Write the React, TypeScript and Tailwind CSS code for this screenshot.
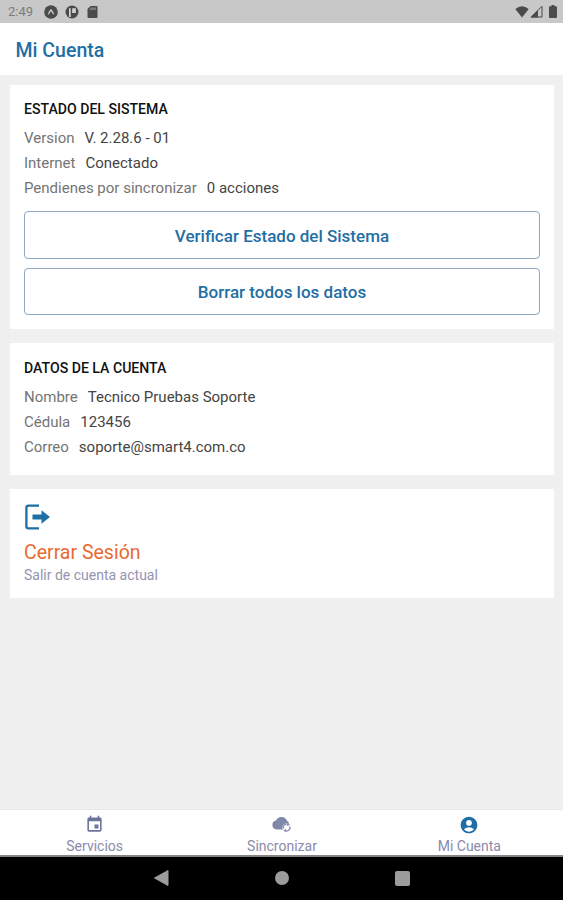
import type { ReactNode } from "react";
import { MdAccountCircle, MdEvent } from "react-icons/md";

function Row({ label, value }: { label: string; value: string }) {
  return (
    <div className="flex h-[25px] items-center whitespace-nowrap text-[15px]">
      <span className="mr-[10px] text-[#747474]">{label}</span>
      <span className="text-[#444]">{value}</span>
    </div>
  );
}

function Card({ title, className, children }: { title?: string; className: string; children: ReactNode }) {
  return (
    <section className={`bg-white px-[14px] ${className}`}>
      {title && <h2 className="mb-[7px] h-5 text-[14.1px] leading-5 font-medium text-[#111]">{title}</h2>}
      {children}
    </section>
  );
}

function OutlineButton({ children }: { children: ReactNode }) {
  return (
    <button className="flex h-[47.5px] w-full items-center justify-center rounded border border-[#8ba7c4] pt-[3px] text-[17px] font-medium text-[#1f6fa5]">
      {children}
    </button>
  );
}

function Tab({ icon, label }: { icon: ReactNode; label: string }) {
  return (
    <button className="flex flex-1 flex-col items-center pt-[5px] text-[#8a8aaa]">
      <span className="flex h-[19px] items-center justify-center">{icon}</span>
      <span className="mt-[3px] text-[14px] leading-[18px]">{label}</span>
    </button>
  );
}

function StatusBar() {
  return (
    <div className="flex h-[23px] items-center justify-between bg-[#c8c8c8] pr-[6px] pl-2 text-[#4b4b4b]">
      <div className="flex items-center">
        <span className="w-[36px] text-[13px] text-[#7c7c7c]">2:49</span>
        <svg className="h-[14px] w-[14px]" viewBox="0 0 14 14">
          <circle cx="7" cy="7" r="6.8" fill="currentColor" />
          <path d="M3.6 9.5 Q5.8 4.2 7 4.2 Q8.2 4.2 10.4 9.5 Q9.3 10 8.4 8.2 L7 6.2 L5.6 8.2 Q4.7 10 3.6 9.5Z" fill="#c8c8c8" />
        </svg>
        <svg className="ml-[7px] h-[14px] w-[14px]" viewBox="0 0 14 14">
          <circle cx="7" cy="7" r="6.5" fill="currentColor" />
          <path d="M4 3.2 H5.7 V12 H4Z M7.2 3.2 H10.8 V8 H7.2Z" fill="#d4d4d4" />
        </svg>
        <svg className="ml-2 h-[14px] w-[11px]" viewBox="0 0 11 14">
          <path d="M3.5 1 H9.5 Q10.5 1 10.5 2 V12 Q10.5 13 9.5 13 H1.5 Q.5 13 .5 12 V4Z" fill="currentColor" />
          <path d="M4 2.5 V5 M6 2.5 V5 M8 2.5 V5" stroke="#aaa" />
        </svg>
      </div>
      <div className="flex items-center">
        <svg className="h-3 w-[14px]" viewBox="0 0 14 12">
          <path d="M.3 3 Q7 -2.4 13.7 3 L7 11.6Z" fill="currentColor" />
        </svg>
        <svg className="ml-[1px] h-[13px] w-[13px]" viewBox="0 0 13 13">
          <path d="M1.2 12 L12 1.2 V12Z" fill="none" stroke="currentColor" />
          <path d="M.5 12.4 L8 5 V12.4Z" fill="currentColor" />
        </svg>
        <svg className="ml-[6px] h-[13px] w-[8px]" viewBox="0 0 8 13">
          <path d="M2.5 0 H5.5 V1.2 H7 Q8 1.2 8 2.2 V12 Q8 13 7 13 H1 Q0 13 0 12 V2.2 Q0 1.2 1 1.2 H2.5Z" fill="currentColor" />
        </svg>
      </div>
    </div>
  );
}

export default function App() {
  return (
    <div className="flex h-[900px] w-full flex-col overflow-hidden bg-[#f0f0f0] font-[Roboto,sans-serif]">
      <StatusBar />
      <header className="flex h-[52px] items-center bg-white pt-[3px] pl-[15.5px]">
        <h1 className="text-[19.5px] font-medium text-[#1f6fa5]">Mi Cuenta</h1>
      </header>
      <main className="flex flex-1 flex-col gap-[14px] pt-[10px] pr-[9px] pl-[10px]">
        <Card title="ESTADO DEL SISTEMA" className="h-[244px] pt-[14px]">
          <Row label="Version" value="V. 2.28.6 - 01" />
          <Row label="Internet" value="Conectado" />
          <Row label="Pendienes por sincronizar" value="0 acciones" />
          <div className="mt-[10px] flex flex-col gap-[9px]">
            <OutlineButton>Verificar Estado del Sistema</OutlineButton>
            <OutlineButton>Borrar todos los datos</OutlineButton>
          </div>
        </Card>
        <Card title="DATOS DE LA CUENTA" className="h-[132px] pt-[15px]">
          <Row label="Nombre" value="Tecnico Pruebas Soporte" />
          <Row label="Cédula" value="123456" />
          <Row label="Correo" value="soporte@smart4.com.co" />
        </Card>
        <Card className="h-[109px] pt-[15px]">
          <svg className="h-[26px] w-[27px] text-[#1f6fa5]" viewBox="0 0 27 26" fill="none">
            <path d="M15 1.6 H4.5 Q2.4 1.6 2.4 3.7 V22.3 Q2.4 24.4 4.5 24.4 H15" stroke="currentColor" strokeWidth="2.3" />
            <path d="M8.5 10.6 H17.5 V6.3 L26 13 L17.5 19.7 V15.4 H8.5Z" fill="currentColor" />
          </svg>
          <div className="mt-[11px] text-[19.5px] leading-6 text-[#e96a30]">Cerrar Sesión</div>
          <div className="text-[14px] leading-[21px] text-[#9494b0]">Salir de cuenta actual</div>
        </Card>
      </main>
      <nav className="flex h-[46px] border-t border-[#e8e8e8] bg-white pl-px">
        <Tab label="Servicios" icon={<MdEvent className="size-[19px] text-[#6b749b]" />} />
        <Tab
          label="Sincronizar"
          icon={
            <svg className="h-[17px] w-5" viewBox="0 0 20 17">
              <path d="M4.5 13.5 A4.5 4.5 0 0 1 4 4.6 A5.9 5.9 0 0 1 15 4.8 Q17 5.6 17.2 8 L12 13.5Z" fill="#7f88a9" />
              <circle cx="14.8" cy="11.7" r="4.4" fill="#fff" />
              <path d="M11.5 12.5 A3.4 3.4 0 0 1 16.5 8.5 M17.8 10.5 A3.4 3.4 0 0 1 12.8 14.5" fill="none" stroke="#8f96b3" strokeWidth="1.5" />
              <path d="M15.5 6.8 L18.2 9 L15 10Z M14 13 L11.2 14 L13.9 16.4Z" fill="#8f96b3" />
            </svg>
          }
        />
        <Tab label="Mi Cuenta" icon={<MdAccountCircle className="size-5 text-[#1f6fa5]" />} />
      </nav>
      <div className="flex h-[45px] items-center justify-center gap-[106px] border-t-2 border-[#858585] bg-black pb-px">
        <svg className="h-4 w-[15px]" viewBox="0 0 15 16">
          <path d="M14 .5 V15.5 L.5 8Z" fill="#9c9c9c" stroke="#9c9c9c" strokeLinejoin="round" />
        </svg>
        <div className="size-[14px] rounded-full bg-[#9c9c9c]" />
        <div className="size-[15px] rounded-[2px] bg-[#9c9c9c]" />
      </div>
    </div>
  );
}
